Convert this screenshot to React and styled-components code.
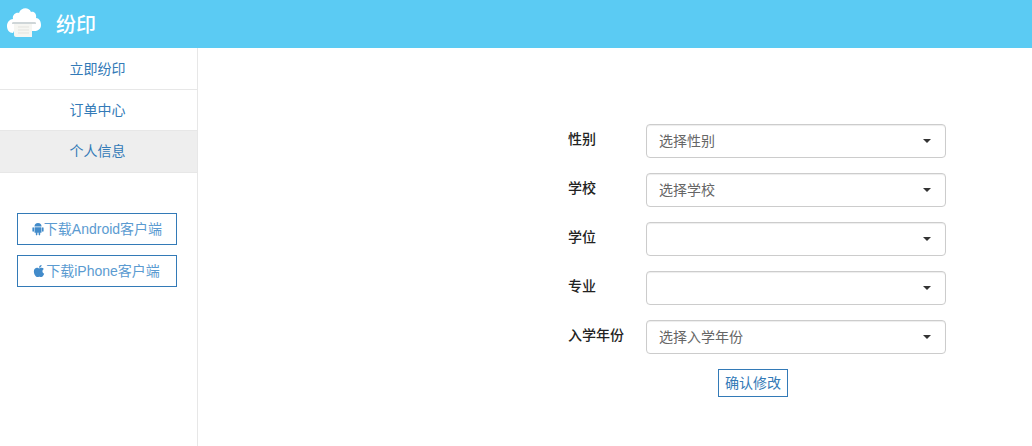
import styled, { createGlobalStyle } from "styled-components";
import { FaApple } from "react-icons/fa";

const GlobalStyle = createGlobalStyle`
    html, body {
        margin: 0;
        height: 100%;
        background: #fff;
    }
    body {
        font-family: "Liberation Sans", "Noto Sans CJK SC", sans-serif;
        font-size: 14px;
        color: #333;
        overflow: hidden;
    }
`;

const Page = styled.div`
    width: 1032px;
    height: 446px;
    display: flex;
    flex-direction: column;
`;

const Header = styled.header`
    height: 48px;
    flex: none;
    background: #5bcbf3;
    display: flex;
    align-items: center;
    padding-left: 7px;
    gap: 15px;
    box-sizing: border-box;
    svg {
        margin-bottom: 4px;
    }
`;

const Brand = styled.span`
    color: #fff;
    font-size: 20px;
    font-weight: 500;
    line-height: 48px;
    padding-top: 1px;
`;

const Body = styled.div`
    flex: 1;
    display: flex;
    min-height: 0;
`;

const Sidebar = styled.aside`
    width: 198px;
    flex: none;
    box-sizing: border-box;
    border-right: 1px solid #e7e7e7;
`;

const MenuItem = styled.a`
    display: block;
    height: ${({ $height }) => $height}px;
    line-height: 40px;
    box-sizing: border-box;
    padding: ${({ $top }) => $top}px 2px 0 0;
    text-align: center;
    color: #337ab7;
    border-bottom: 1px solid #e7e7e7;
    background: ${({ $active }) => ($active ? "#eee" : "#fff")};
`;

const Downloads = styled.div`
    display: flex;
    flex-direction: column;
    gap: 10px;
    margin: 40px 0 0 17px;
`;

const DownloadButton = styled.a`
    width: 160px;
    height: 32px;
    box-sizing: border-box;
    border: 1px solid #337ab7;
    padding: 0 ${({ $inset }) => $inset}px 2px 0;
    display: flex;
    align-items: center;
    justify-content: center;
    color: #5b9bd1;
    svg {
        color: #428bca;
        flex: none;
        margin-top: 2px;
    }
`;

const Main = styled.main`
    flex: 1;
    padding: 76px 0 0 370px;
`;

const Form = styled.form`
    width: 378px;
    display: flex;
    flex-direction: column;
    gap: 15px;
`;

const Row = styled.div`
    display: flex;
    align-items: center;
`;

const Label = styled.label`
    width: 78px;
    flex: none;
    font-size: 14px;
    font-weight: 500;
    color: #222;
    padding-bottom: 6px;
`;

const Select = styled.div`
    width: 300px;
    height: 34px;
    box-sizing: border-box;
    border: 1px solid #ccc;
    border-radius: 4px;
    padding: 0 14px 0 12px;
    display: flex;
    align-items: center;
    justify-content: space-between;
    color: #666;
    background: #fff;
    box-shadow: inset 0 1px 1px rgba(0, 0, 0, 0.075);
    span:first-child {
        padding-bottom: 3px;
    }
`;

const Caret = styled.span`
    width: 0;
    height: 0;
    border-top: 4px solid #333;
    border-left: 4px solid transparent;
    border-right: 4px solid transparent;
`;

const Actions = styled.div`
    display: flex;
    justify-content: center;
    padding-right: 8px;
`;

const Submit = styled.button`
    height: 28px;
    padding: 0 6px 2px;
    box-sizing: border-box;
    border: 1px solid #337ab7;
    background: #fff;
    color: #337ab7;
    font: inherit;
`;

const Logo = () => (
    <svg width="34" height="30" viewBox="0 0 34 30">
        <path
            d="M6 26 C2 26 0 23 0 19 C0 15 3 12 6 12 C5 8 9 5 12 6 C14 0 22 0 24 5 C27 4 30 7 29 11 C32 11 34 14 34 18 C34 22 31 24 27 24 L7 24 Z"
            fill="#fff"
        />
        <path d="M5 16 C5 15 6 15 7 15 H28 C29 15 29 16 29 17 H5 Z" fill="#cfd6d8" />
        <path d="M7 17 H25 V30 H9 C8 30 7 29 7 28 Z" fill="#f6f6f2" />
        <path d="M11 20 H22 M11 23 H22 M11 26 H22" stroke="#e3e3de" strokeWidth="1" />
    </svg>
);

const AndroidIcon = () => (
    <svg width="12" height="14" viewBox="0 0 12 14" fill="currentColor">
        <path d="M2.5 4.6 A3.5 3.5 0 0 1 9.5 4.6 Z" />
        <rect x="2.5" y="5.2" width="7" height="5.6" rx="0.6" />
        <rect x="0.4" y="5.2" width="1.6" height="4.6" rx="0.8" />
        <rect x="10" y="5.2" width="1.6" height="4.6" rx="0.8" />
        <rect x="3.8" y="10" width="1.6" height="3.4" rx="0.8" />
        <rect x="6.6" y="10" width="1.6" height="3.4" rx="0.8" />
    </svg>
);

const fields = [
    { label: "性别", value: "选择性别" },
    { label: "学校", value: "选择学校" },
    { label: "学位", value: "" },
    { label: "专业", value: "" },
    { label: "入学年份", value: "选择入学年份" },
];

const App = () => (
    <Page>
        <GlobalStyle />
        <Header>
            <Logo />
            <Brand>纷印</Brand>
        </Header>
        <Body>
            <Sidebar>
                <MenuItem $height={42} $top={1}>立即纷印</MenuItem>
                <MenuItem $height={41} $top={0}>订单中心</MenuItem>
                <MenuItem $height={42} $top={0} $active>个人信息</MenuItem>
                <Downloads>
                    <DownloadButton $inset={0}><AndroidIcon />下载Android客户端</DownloadButton>
                    <DownloadButton $inset={2}><FaApple size={14} />下载iPhone客户端</DownloadButton>
                </Downloads>
            </Sidebar>
            <Main>
                <Form>
                    {fields.map(({ label, value }) => (
                        <Row key={label}>
                            <Label>{label}</Label>
                            <Select>
                                <span>{value}</span>
                                <Caret />
                            </Select>
                        </Row>
                    ))}
                    <Actions>
                        <Submit type="button">确认修改</Submit>
                    </Actions>
                </Form>
            </Main>
        </Body>
    </Page>
);

export default App;
